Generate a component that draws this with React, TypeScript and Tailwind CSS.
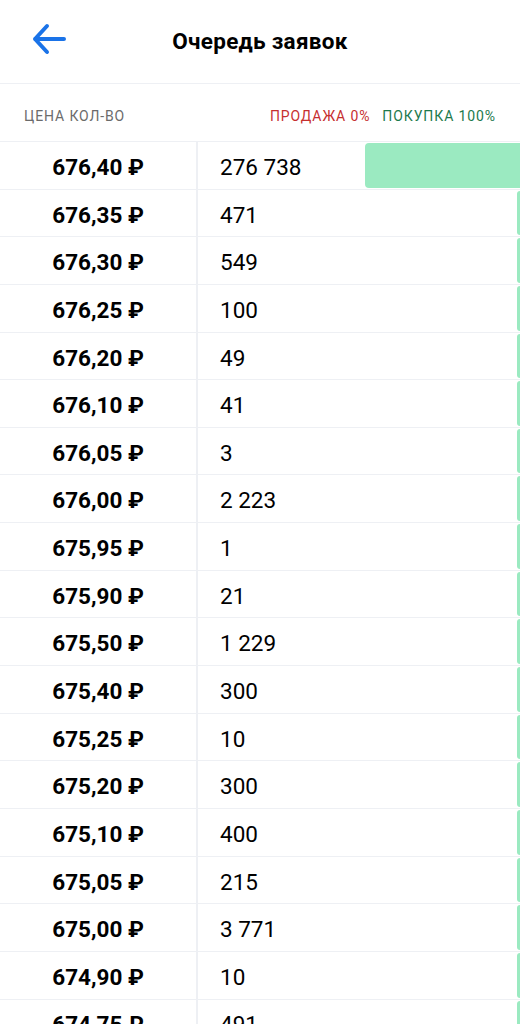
const rows: [string, number][] = [
  ["676,40", 276738],
  ["676,35", 471],
  ["676,30", 549],
  ["676,25", 100],
  ["676,20", 49],
  ["676,10", 41],
  ["676,05", 3],
  ["676,00", 2223],
  ["675,95", 1],
  ["675,90", 21],
  ["675,50", 1229],
  ["675,40", 300],
  ["675,25", 10],
  ["675,20", 300],
  ["675,10", 400],
  ["675,05", 215],
  ["675,00", 3771],
  ["674,90", 10],
  ["674,75", 491],
];

const maxQty = Math.max(...rows.map((r) => r[1]));

const fmt = (n: number) => n.toString().replace(/\B(?=(\d{3})+(?!\d))/g, " ");

export default function App() {
  return (
    <div
      className="w-[520px] h-[1024px] overflow-hidden bg-white text-black"
      style={{ fontFamily: "Roboto, 'Noto Sans', sans-serif" }}
    >
      <div className="relative h-[84px] flex items-center justify-center border-b border-[#eef0f4]">
        <button className="absolute left-[31px] top-[22px] p-0">
          <svg width="36" height="34" viewBox="0 0 36 34" fill="none">
            <path
              d="M33 17H4M16 4L4 17L16 30"
              stroke="#1a73e8"
              strokeWidth="4"
              strokeLinecap="round"
              strokeLinejoin="round"
            />
          </svg>
        </button>
        <h1 className="text-[22.5px] font-bold tracking-[0.3px]">Очередь заявок</h1>
      </div>

      <div className="h-[57px] flex items-center px-[24px] text-[14px] tracking-[0.9px] pt-[7px]">
        <span className="text-[#6b6b6b]">ЦЕНА КОЛ-ВО</span>
        <span className="ml-auto text-[#c62f2f]">ПРОДАЖА 0%</span>
        <span className="ml-[12px] text-[#1d7a4d]">ПОКУПКА 100%</span>
      </div>

      <div className="border-t border-[#eef0f4]">
        {rows.map(([price, qty]) => {
          const bar = Math.max(3, Math.round((qty / maxQty) * 155));
          return (
            <div key={price} className="flex h-[47.65px] border-b border-[#eef0f4]">
              <div className="w-[198px] shrink-0 border-r-2 border-[#eef0f4] flex items-center justify-center text-[22.5px] font-bold pt-[5px]">
                {price} ₽
              </div>
              <div className="flex-1 flex items-center pl-[22px] text-[22.5px] pt-[5px]">{fmt(qty)}</div>
              <div className="py-[1px] flex">
                <div className="bg-[#9beac1] rounded-l-[4px]" style={{ width: bar }} />
              </div>
            </div>
          );
        })}
      </div>
    </div>
  );
}
